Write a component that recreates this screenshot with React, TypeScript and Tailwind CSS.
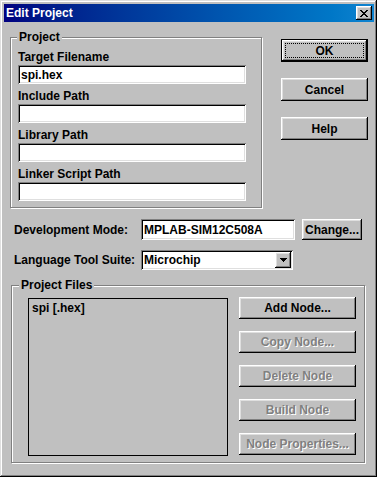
import React from "react";

const raised =
  "shadow-[inset_-1px_-1px_#000,inset_1px_1px_#fff,inset_-2px_-2px_#808080,inset_2px_2px_#dfdfdf]";
const sunken =
  "shadow-[inset_1px_1px_#808080,inset_-1px_-1px_#fff,inset_2px_2px_#000,inset_-2px_-2px_#dfdfdf]";
const etched = "border border-[#808080] shadow-[inset_1px_1px_#fff,1px_1px_#fff]";

function Btn({
  children,
  className = "",
  disabled = false,
}: {
  children: React.ReactNode;
  className?: string;
  disabled?: boolean;
}) {
  return (
    <div
      className={`${raised} bg-[#c0c0c0] flex items-center justify-center leading-none ${
        disabled ? "text-[#808080] [text-shadow:1px_1px_#fff]" : "text-black"
      } ${className}`}
    >
      {children}
    </div>
  );
}

function Field({ value = "" }: { value?: string }) {
  return (
    <div className={`${sunken} bg-white h-[19px] w-[228px] flex items-center px-[3px] leading-none`}>
      {value}
    </div>
  );
}

function CloseGlyph() {
  const px: [number, number, number][] = [
    [0, 0, 2],
    [6, 0, 2],
    [1, 1, 2],
    [5, 1, 2],
    [2, 2, 4],
    [3, 3, 2],
    [2, 4, 4],
    [1, 5, 2],
    [5, 5, 2],
    [0, 6, 2],
    [6, 6, 2],
  ];
  return (
    <svg width="8" height="7" viewBox="0 0 8 7" shapeRendering="crispEdges">
      {px.map(([x, y, w], i) => (
        <rect key={i} x={x} y={y} width={w} height={1} fill="#000" />
      ))}
    </svg>
  );
}

function DownArrow() {
  return (
    <svg width="7" height="4" viewBox="0 0 7 4" shapeRendering="crispEdges">
      <rect x="0" y="0" width="7" height="1" fill="#000" />
      <rect x="1" y="1" width="5" height="1" fill="#000" />
      <rect x="2" y="2" width="3" height="1" fill="#000" />
      <rect x="3" y="3" width="1" height="1" fill="#000" />
    </svg>
  );
}

export default function App() {
  return (
    <div className="w-[377px] h-[477px] bg-[#c0c0c0] pt-[4px] pl-[4px] pr-[3px] flex flex-col shadow-[inset_-1px_-1px_#000,inset_1px_1px_#dfdfdf,inset_-2px_-2px_#808080,inset_2px_2px_#fff] font-['Liberation_Sans',Arial,sans-serif] text-[12px] font-bold text-black select-none">
      {/* Title bar */}
      <div className="h-[18px] bg-gradient-to-r from-[#000080] to-[#1084d0] flex items-center justify-between pl-[2px] pr-[2px]">
        <span className="text-white text-[12px] font-bold leading-none">Edit Project</span>
        <div className={`${raised} bg-[#c0c0c0] w-[16px] h-[14px] flex items-center justify-center`}>
          <CloseGlyph />
        </div>
      </div>

      {/* Body */}
      <div className="flex flex-col">
        {/* Row 1 */}
        <div className="flex mt-[15px] pl-[6px]">
          <div className={`relative ${etched} w-[252px] h-[171px] pt-[12px] pl-[7px]`}>
            <span className="absolute -top-[8px] left-[6px] px-[2px] bg-[#c0c0c0] leading-[14px]">
              Project
            </span>
            <div className="h-[15px] leading-[15px]">Target Filename</div>
            <Field value="spi.hex" />
            <div className="h-[15px] leading-[15px] mt-[5px]">Include Path</div>
            <Field />
            <div className="h-[15px] leading-[15px] mt-[5px]">Library Path</div>
            <Field />
            <div className="h-[15px] leading-[15px] mt-[5px]">Linker Script Path</div>
            <Field />
          </div>
          <div className="ml-[19px] mt-[2px] w-[87px] flex flex-col gap-[16px]">
            <div className="h-[23px] border border-black">
              <Btn className="h-full w-full relative">
                <span className="absolute inset-[3px] border border-dotted border-black" />
                OK
              </Btn>
            </div>
            <Btn className="h-[23px]">Cancel</Btn>
            <Btn className="h-[23px]">Help</Btn>
          </div>
        </div>

        {/* Development Mode */}
        <div className="flex items-center mt-[11px] pl-[10px]">
          <div className="w-[127px]">Development Mode:</div>
          <div className={`${sunken} bg-white h-[21px] w-[154px] flex items-center px-[3px] leading-none`}>
            MPLAB-SIM12C508A
          </div>
          <Btn className="ml-[7px] w-[60px] h-[21px]">Change...</Btn>
        </div>

        {/* Language Tool Suite */}
        <div className="flex items-center mt-[10px] pl-[10px]">
          <div className="w-[127px]">Language Tool Suite:</div>
          <div className={`${sunken} bg-white h-[20px] w-[152px] flex items-center pl-[3px] pr-[2px] leading-none`}>
            <span className="flex-1">Microchip</span>
            <Btn className="w-[16px] h-[16px]">
              <DownArrow />
            </Btn>
          </div>
        </div>

        {/* Project Files */}
        <div className={`relative ${etched} mt-[15px] ml-[7px] w-[354px] h-[178px] flex pt-[12px] pl-[16px]`}>
          <span className="absolute -top-[8px] left-[7px] px-[2px] bg-[#c0c0c0] leading-[14px]">
            Project Files
          </span>
          <div className="w-[200px] h-[158px] border border-black px-[3px] pt-[2px] leading-[14px]">
            spi [.hex]
          </div>
          <div className="ml-[11px] -mt-[1px] w-[117px] flex flex-col gap-[12px]">
            <Btn className="h-[22px]">Add Node...</Btn>
            <Btn className="h-[22px]" disabled>
              Copy Node...
            </Btn>
            <Btn className="h-[22px]" disabled>
              Delete Node
            </Btn>
            <Btn className="h-[22px]" disabled>
              Build Node
            </Btn>
            <Btn className="h-[22px]" disabled>
              Node Properties...
            </Btn>
          </div>
        </div>
      </div>
    </div>
  );
}
